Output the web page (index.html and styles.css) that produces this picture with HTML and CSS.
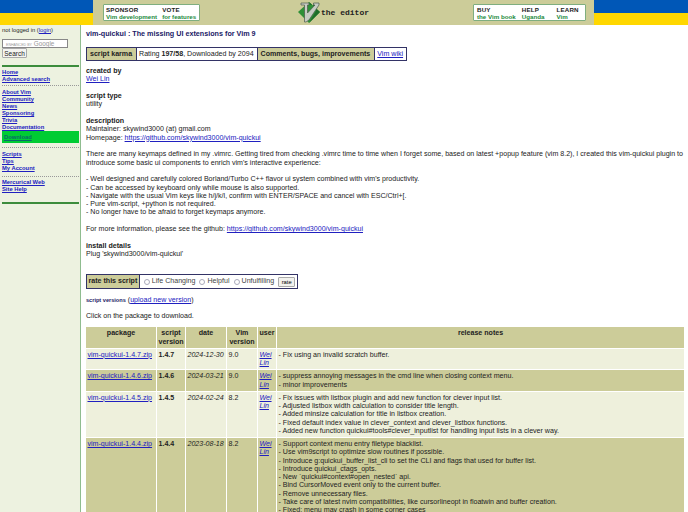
FILE: index.html
```html
<!DOCTYPE html>
<html lang="en">
<head>
<meta charset="utf-8">
<title>vim-quickui</title>
<link rel="stylesheet" href="styles.css">
</head>
<body>
<header class="top">
  <div class="flag flag-left"></div>
  <div class="band">
    <div class="box box-left">
      <div class="item"><b>SPONSOR</b><span>Vim development</span></div>
      <div class="item"><b>VOTE</b><span>for features</span></div>
    </div>
    <div class="logo">
      <svg class="vim-icon" width="22" height="21" viewBox="0 0 22 21">
        <polygon points="11,0 22,10 11,21 0,10" fill="#2f8f37"/>
        <polygon points="11,0 22,10 11,21 18,9 18,3 12,3" fill="#1f6e2a"/>
        <polygon points="3,1 11,1 11,3 9.5,3 9.5,11 17,3 15.5,3 15.5,1 21,1 21,3 11,18 8,20 6.5,20 6.5,3 3,3" fill="#c6cbc2" stroke="#4a5a4a" stroke-width=".7"/>
      </svg>
      <span class="logo-text">the editor</span>
    </div>
    <div class="box box-right">
      <div class="item"><b>BUY</b><span>the Vim book</span></div>
      <div class="item item-wide"><b>HELP</b><span>Uganda</span></div>
      <div class="item"><b>LEARN</b><span>Vim</span></div>
    </div>
  </div>
  <div class="flag"></div>
</header>
<div class="page">
  <aside class="side">
    <p class="login">not logged in (<a href="#">login</a>)</p>
    <div class="search">
      <div class="google"><small>ENHANCED BY</small> Google</div>
      <button class="search-btn" type="button">Search</button>
    </div>
    <hr class="bar">
    <nav class="nav">
      <a href="#">Home</a><a href="#">Advanced search</a>
      <hr class="dots">
      <a href="#">About Vim</a><a href="#">Community</a><a href="#">News</a><a href="#">Sponsoring</a><a href="#">Trivia</a><a href="#">Documentation</a>
      <a href="#" class="current">Download</a>
      <hr class="dots">
      <a href="#">Scripts</a><a href="#">Tips</a><a href="#">My Account</a>
      <hr class="dots">
      <a href="#">Mercurical Web</a><a href="#">Site Help</a>
    </nav>
    <hr class="bar bar-end">
  </aside>
  <main class="main">
    <h1 class="title">vim-quickui : The missing UI extensions for Vim 9</h1>
    <div class="karma">
      <span class="k-head">script karma</span>
      <span class="k-cell">Rating <b>197/58</b>, Downloaded by 2094</span>
      <span class="k-head">Comments, bugs, improvements</span>
      <span class="k-cell"><a href="#">Vim wiki</a></span>
    </div>
    <h2 class="label first">created by</h2>
    <p><a href="#">Wei Lin</a></p>
    <h2 class="label">script type</h2>
    <p>utility</p>
    <h2 class="label">description</h2>
    <p>Maintainer: skywind3000 (at) gmail.com<br>Homepage: <a href="#">https://github.com/skywind3000/vim-quickui</a></p>
    <p class="para">There are many keymaps defined in my .vimrc. Getting tired from checking .vimrc time to time when I forget some, based on latest +popup feature (vim 8.2), I created this vim-quickui plugin to introduce some basic ui components to enrich vim's interactive experience:</p>
    <p class="para">- Well designed and carefully colored Borland/Turbo C++ flavor ui system combined with vim's productivity.<br>- Can be accessed by keyboard only while mouse is also supported.<br>- Navigate with the usual Vim keys like h/j/k/l, confirm with ENTER/SPACE and cancel with ESC/Ctrl+[.<br>- Pure vim-script, +python is not required.<br>- No longer have to be afraid to forget keymaps anymore.</p>
    <p class="para">For more information, please see the github: <a href="#">https://github.com/skywind3000/vim-quickui</a></p>
    <h2 class="label">install details</h2>
    <p>Plug 'skywind3000/vim-quickui'</p>
    <form class="rate">
      <span class="k-head">rate this script</span>
      <span class="rate-cell">
        <label><input type="radio" name="r">Life Changing</label>
        <label><input type="radio" name="r">Helpful</label>
        <label><input type="radio" name="r">Unfulfilling</label>
        <button class="rate-btn" type="button">rate</button>
      </span>
    </form>
    <p class="versions"><b>script versions</b> (<a href="#">upload new version</a>)</p>
    <p class="click">Click on the package to download.</p>
    <table class="vers">
      <thead>
        <tr><th class="c1">package</th><th class="c2">script version</th><th class="c3">date</th><th class="c4">Vim version</th><th class="c5">user</th><th>release notes</th></tr>
      </thead>
      <tbody>
        <tr class="light"><td><a href="#">vim-quickui-1.4.7.zip</a></td><td><b>1.4.7</b></td><td><i>2024-12-30</i></td><td>9.0</td><td><i><a href="#">Wei Lin</a></i></td><td>- Fix using an invalid scratch buffer.</td></tr>
        <tr class="dark"><td><a href="#">vim-quickui-1.4.6.zip</a></td><td><b>1.4.6</b></td><td><i>2024-03-21</i></td><td>9.0</td><td><i><a href="#">Wei Lin</a></i></td><td>- suppress annoying messages in the cmd line when closing context menu.<br>- minor improvements</td></tr>
        <tr class="light"><td><a href="#">vim-quickui-1.4.5.zip</a></td><td><b>1.4.5</b></td><td><i>2024-02-24</i></td><td>8.2</td><td><i><a href="#">Wei Lin</a></i></td><td>- Fix issues with listbox plugin and add new function for clever input list.<br>- Adjusted listbox width calculation to consider title length.<br>- Added minsize calculation for title in listbox creation.<br>- Fixed default index value in clever_context and clever_listbox functions.<br>- Added new function quickui#tools#clever_inputlist for handling input lists in a clever way.</td></tr>
        <tr class="dark"><td><a href="#">vim-quickui-1.4.4.zip</a></td><td><b>1.4.4</b></td><td><i>2023-08-18</i></td><td>8.2</td><td><i><a href="#">Wei Lin</a></i></td><td>- Support context menu entry filetype blacklist.<br>- Use vim9script to optimize slow routines if possible.<br>- Introduce g:quickui_buffer_list_cli to set the CLI and flags that used for buffer list.<br>- Introduce quickui_ctags_opts.<br>- New `quickui#context#open_nested` api.<br>- Bind CursorMoved event only to the current buffer.<br>- Remove unnecessary files.<br>- Take care of latest nvim compatibilities, like cursorlineopt in floatwin and buffer creation.<br>- Fixed: menu may crash in some corner cases</td></tr>
      </tbody>
    </table>
  </main>
</div>
</body>
</html>
```
FILE: styles.css
```css
html, body { margin: 0; padding: 0; height: 512px; overflow: hidden; }
body { font: 7.08px/8.25px "Liberation Sans", Arial, sans-serif; color: #222; background: #fff; }
a { color: #2020c0; }
p { margin: 0; }

.top { display: flex; height: 25px; }
.flag { width: 94px; flex: none; background: linear-gradient(#0057b7 0 13px, #ffd700 13px); }
.flag-left { width: 93px; }
.band { flex: 1; background: #cccc99; display: flex; justify-content: space-between; padding: 4px 8px 0 10px; }
.box { display: flex; height: 17px; padding: 1px 2px; box-sizing: border-box; background: #fff; border: 1px solid #7fae7f; border-radius: 1px; }
.box-left { gap: 5px; width: 97px; }
.box-right { width: 113px; gap: 6px; padding-left: 3px; }
.item { display: flex; flex-direction: column; font-size: 6.2px; line-height: 7.4px; }
.item-wide { margin-right: 6px; }
.item b { color: #222; letter-spacing: .2px; }
.item span { color: #1c8a3c; font-weight: bold; }
.logo { display: flex; align-items: center; gap: 1px; height: 25px; margin: -4px 0 0 0; padding-right: 6px; }
.logo-text { font: bold 8px "Liberation Mono", monospace; color: #222; }

.page { display: flex; height: 487px; }
.side { width: 81px; flex: none; box-sizing: border-box; background: #edf2e0; border-right: 1px solid #8fbc8f; padding: 2px 1px 0 2px; font-size: 5.8px; line-height: 7px; }
.search { margin-top: 5px; }
.google { width: 61px; height: 7px; background: #fff; border: 1px solid #888; font-size: 6.4px; line-height: 7px; color: #999; padding-left: 3px; }
.google small { font-size: 3.6px; }
.search-btn { display: block; font: 6.5px "Liberation Sans", sans-serif; height: 10px; width: 25px; padding: 0; background: #f4f4f0; border: 1px solid #aaa; border-radius: 1px; color: #222; }
.bar { height: 2px; background: #3c8c3c; border: 0; margin: 7px 0 2px; }
.bar-end { margin-top: 9px; }
.nav { display: flex; flex-direction: column; }
.nav a { font-weight: bold; line-height: 7px; }
.dots { border: 0; border-top: 1px dotted #999; margin: 2px 0 3px; }
.nav .current { background: #00cc33; color: #0a6a6a; padding: 3px 2px; height: 6px; line-height: 6px; box-sizing: content-box; }
.nav .current + .dots { margin: 4px 0 3px; }
.nav .current + .dots ~ .dots { margin: 4px 0 2px; }

.main { flex: 1; padding: 5px 2px 0 5px; min-width: 0; }
.title { font-size: 7.2px; line-height: 8px; margin: 0 0 9px; color: #1a1a66; font-weight: bold; }
.karma { display: flex; width: 321px; box-sizing: border-box; border: 1px solid #333366; margin-bottom: 6px; line-height: 12px; white-space: nowrap; }
.k-head { background: #cccc99; font-weight: bold; padding: 0 3px; border-right: 1px solid #333366; flex: auto; white-space: nowrap; }
.k-cell { padding: 0 2px; background: #fff; border-right: 1px solid #333366; white-space: nowrap; flex: auto; }
.k-cell:last-child { border-right: 0; }
.label { font-size: 7.08px; line-height: 8.25px; margin: 8.5px 0 0; font-weight: bold; color: #222; }
.label.first { margin-top: 0; }
.para { margin-top: 8.5px; }

.rate { display: flex; width: 212px; box-sizing: border-box; border: 1px solid #333366; margin: 16px 0 0; line-height: 13px; white-space: nowrap; }
.rate .k-head { padding: 0 1.5px; flex: none; }
.rate-cell { display: flex; flex: none; align-items: center; gap: 4px; padding: 0 0 0 4px; }
.rate label { display: flex; flex: none; align-items: center; color: #444; }
.rate input { appearance: none; width: 6px; height: 6px; margin: 0 2px 0 0; border: 1px solid #aab; border-radius: 50%; background: #fff; box-sizing: border-box; }
.rate-btn { font: 5.8px "Liberation Sans", sans-serif; width: 17px; height: 10px; padding: 0; background: #f2f2ee; border: 1px solid #aaa; border-radius: 1px; }
.versions { margin-top: 7px; }
.versions b { font-size: 5.6px; color: #1a1a66; }
.click { margin-top: 7.5px; }

.vers { margin: 6px 0 0 -1px; border-collapse: separate; border-spacing: 1px; width: 600px; table-layout: fixed; }
.c1 { width: 70px; } .c2 { width: 28px; } .c3 { width: 40px; } .c4 { width: 30px; } .c5 { width: 18px; }
.vers th { box-sizing: border-box; background: #cccc99; vertical-align: top; padding: 2px 1.5px; font-weight: bold; }
.vers td { vertical-align: top; padding: 2px 1.5px; }
.vers td:first-child { white-space: nowrap; }
.light td { background: #eef0dc; }
.dark td { background: #cccc99; }
```
